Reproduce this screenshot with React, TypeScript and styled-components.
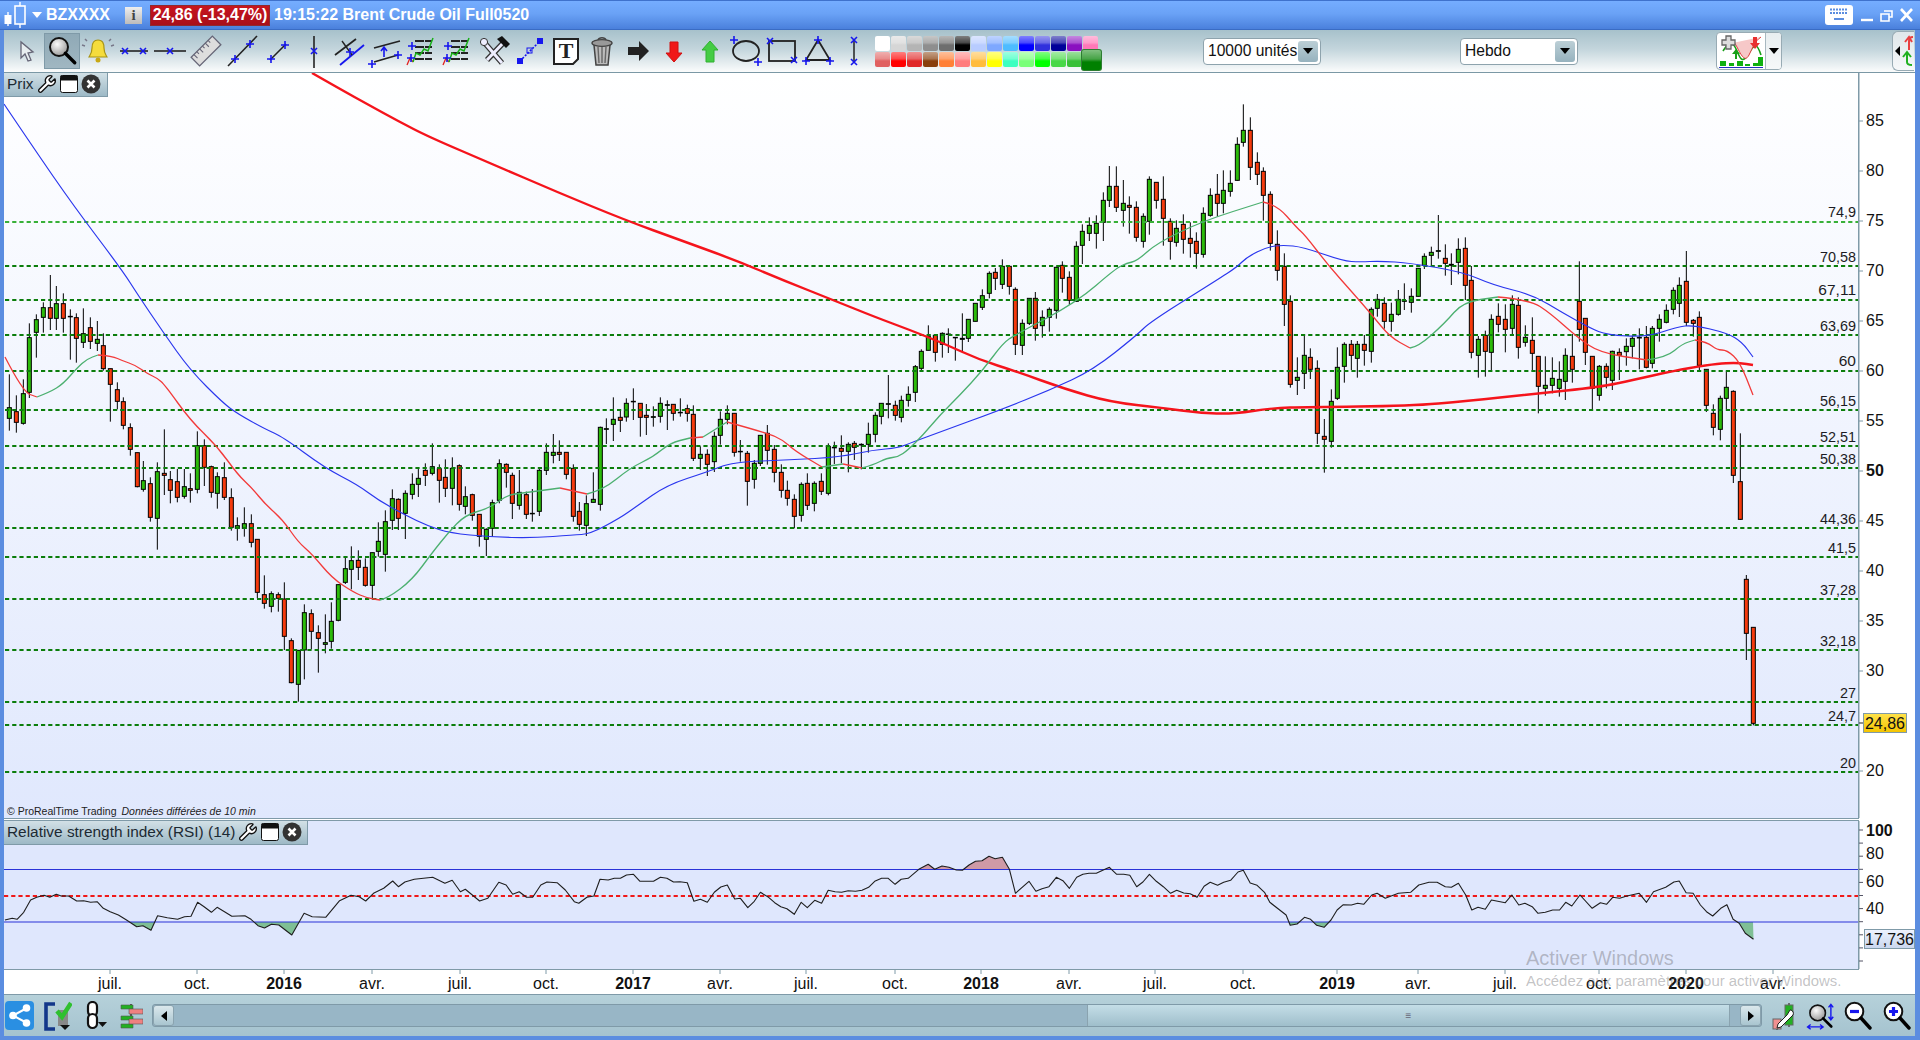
import React from "react"
import styled, { createGlobalStyle } from "styled-components"
import { Wrench } from "lucide-react"

const FONT = `"Liberation Sans", Arial, sans-serif`

const GlobalStyle = createGlobalStyle`
  html, body { margin: 0; padding: 0; background: #5b8de0; overflow: hidden; }
  * { box-sizing: border-box; }
`

/* ---------- data, read off the picture: x high top bottom low colour (in crop pixels) ---------- */

type Candle = { x: number; h: number; t: number; b: number; l: number; up: boolean }

const seg = (ox: number, oy: number, s: string): Candle[] =>
  s.trim().split("\n").map((row) => {
    const [x, h, t, b, l, c] = row.trim().split(" ")
    return {
      x: ox + Number(x) / 3,
      h: oy + Number(h) / 3,
      t: oy + Number(t) / 3,
      b: oy + Number(b) / 3,
      l: oy + Number(l) / 3,
      up: c === "g",
    }
  })

const CANDLES: Candle[] = [
  ...seg(0, 270, `
28 313 413 445 482 g
49 376 425 457 488 r
70 328 371 460 464 g
88 160 203 367 384 g
109 133 149 187 263 g
130 97 113 142 188 g
151 15 113 145 180 r
169 48 101 145 180 g
190 70 101 145 188 r
211 118 139 140 269 r
229 130 143 205 278 r
250 115 191 217 234 g
271 142 173 214 237 r
292 153 208 220 243 g
310 190 227 296 302 r
331 296 296 343 455 r
352 337 359 394 418 r
370 382 395 466 478 r
391 460 473 538 557 r
412 548 548 650 652 r
430 573 632 658 665 g
451 622 641 742 755 r
472 577 605 745 839 g
493 478 610 616 675 r
511 603 629 661 700 r
532 597 635 682 697 r
553 597 650 679 686 g
571 610 656 661 698 r
592 484 527 658 670 g
613 508 527 592 648 r
634 587 590 667 683 r
652 607 620 670 716 g
673 577 623 682 690 r
694 655 683 772 782 r
712 742 767 775 812 g
733 712 761 775 800 g
754 733 761 817 832 r
772 808 808 967 985 r
793 916 974 1000 1016 r
814 964 971 1009 1027 g
835 967 974 985 1025 r
853 937 987 1099 1140 r
874 1105 1112 1238 1240 r
895 1140 1141 1243 1295 g
913 1003 1028 1140 1228 g
934 1018 1031 1084 1138 r
955 1066 1088 1105 1208 r
976 1033 1118 1123 1150 g
994 997 1054 1114 1136 g
1015 943 944 1051 1054 g
1036 860 896 937 942 g
1054 829 872 898 958 g
1075 841 871 892 930 r
1096 865 892 946 950 r
1117 848 848 946 988 g
1135 757 814 844 860 g
1156 721 755 853 905 g
1177 658 686 751 780 g
1195 685 688 745 780 r
1216 661 670 730 807 g
1237 610 643 673 688 g
1255 597 625 643 681 g
1276 580 601 616 648 r
1297 520 590 610 616 g
1318 583 596 631 698 r
1336 568 622 655 681 r
1357 562 595 655 706 g
1378 583 587 703 722 r
1396 649 680 709 733 g
1417 671 674 736 752 r
1438 733 733 799 830 r
1459 775 778 808 858 g
1477 689 698 775 800 g
1498 568 581 691 700 g`),
  ...seg(490, 380, `
49 250 253 277 323 r
67 278 286 370 417 r
88 270 337 376 389 g
109 335 344 403 417 r
127 327 400 401 425 g
148 265 271 394 408 g
169 190 217 271 285 g
190 162 217 226 250 g
208 181 217 223 243 r
229 217 217 283 298 r
250 253 265 409 425 r
268 366 394 433 452 r
289 346 371 436 468 g
310 277 358 367 367 g
331 140 142 373 392 g
349 115 146 148 192 g
370 52 118 133 183 g
391 91 112 121 156 r
409 55 70 111 125 g
430 25 64 65 120 g
451 70 70 112 170 r
469 72 106 112 165 r
490 79 110 112 140 g
511 52 70 109 128 g
532 61 74 76 150 g
550 73 73 100 122 r
571 55 97 98 110 g
592 74 86 100 125 r
610 76 103 235 243 r
631 199 223 235 270 g
652 208 223 253 288 r
673 155 169 245 276 g
691 94 118 166 194 g
712 76 100 118 133 g
733 100 100 217 230 r
751 180 214 215 245 g
772 213 220 304 377 r
793 240 250 298 326 g
811 165 166 250 258 g
832 135 160 211 254 r
853 195 208 277 307 r
874 253 277 331 353 r
892 302 331 355 377 r
913 343 358 409 445 r
934 307 313 406 425 g
952 280 310 376 390 r
973 304 310 370 394 g
994 280 304 334 345 r
1015 190 199 340 346 g
1033 185 202 203 252 g
1054 166 205 214 250 r
1075 187 193 214 277 g
1093 183 190 202 240 r
1114 190 193 195 268 g
1135 128 163 193 218 g
1156 97 106 163 187 g
1174 70 70 109 133 g
1195 -15 71 73 115 g
1216 62 76 106 122 r
1234 47 61 112 127 g
1255 19 43 61 80 g
1276 -45 -40 37 66 g`),
  ...seg(860, 90, `
184 778 784 835 840 g
205 706 739 781 781 g
226 736 736 787 815 r
247 727 730 763 803 g
265 715 732 733 789 g
286 742 742 743 812 g
307 670 745 748 786 g
325 688 688 745 756 g
346 640 640 694 694 g
367 598 617 652 660 g
388 544 550 610 625 g
406 534 547 565 600 r
427 508 529 583 597 g
448 529 529 589 614 r
466 592 598 763 795 r
487 688 700 766 795 g
508 625 625 700 705 g
526 606 625 715 752 r
547 661 682 707 743 g
568 652 658 682 725 g
589 530 532 661 686 g
607 514 526 565 608 r
628 544 562 631 644 r
649 454 469 634 636 g
667 403 424 466 522 g
688 382 406 430 453 g
709 376 400 430 476 g
730 307 331 397 453 g
748 228 289 331 351 g
769 229 289 352 366 r
790 270 340 361 410 g
808 319 346 352 431 r
829 334 352 442 455 r
850 370 379 454 473 g
868 259 268 394 434 g
889 277 277 331 356 r
910 259 328 385 467 r
931 385 394 454 509 r
949 391 415 457 470 g
970 373 403 448 491 r
991 397 445 460 503 r
1009 427 454 490 536 r
1030 352 370 493 503 g
1051 295 316 376 380 g
1072 252 313 340 379 r
1090 241 301 340 370 g
1111 241 280 304 320 g
1132 142 163 271 272 g
1150 43 121 157 170 g
1171 82 121 232 270 r
1192 187 217 253 285 r
1210 232 244 316 392 r
1231 304 313 460 482 r
1252 421 463 541 572 r
1273 490 529 643 708 r`),
  ...seg(1200, 200, `
271 286 304 553 563 r
292 472 532 541 585 g
313 403 466 520 567 g
331 445 472 508 537 r
352 481 505 700 732 r
373 657 709 718 818 r
394 568 604 724 743 g
412 442 502 595 600 g
433 427 433 499 548 g
454 420 433 466 510 r
472 423 433 475 533 g
493 405 433 451 497 r
514 322 328 454 488 g
532 282 298 325 350 g
553 292 310 364 386 r
574 308 343 364 395 g
595 270 298 343 347 g
613 250 302 304 330 g
634 265 289 307 338 g
655 205 205 289 290 g
673 160 169 196 207 g
694 140 157 166 195 g
715 45 152 154 176 g
736 133 175 190 227 r
754 160 193 196 255 g
775 115 148 187 223 g
796 112 145 256 300 r
814 198 241 457 475 r
835 408 418 466 533 g
856 392 406 454 530 r
874 343 358 457 510 g
895 310 349 373 397 r
916 313 358 388 457 r
937 286 313 385 405 g
955 292 316 442 476 r
976 376 412 427 440 g
997 352 421 460 515 r
1015 469 469 559 640 r
1036 469 556 565 587 g
1057 472 535 556 580 g
1078 484 538 565 590 g
1096 445 466 544 600 g
1117 402 469 508 548 r
1138 184 304 388 425 r
1156 355 355 457 495 r
1177 469 469 565 632 r`),
  ...seg(1500, 200, `
298 495 499 586 602 g
319 490 499 532 565 r
337 452 454 541 570 g
358 445 457 466 540 r
379 415 439 455 497 g
397 407 415 439 475 g
418 385 412 414 508 g
439 378 412 502 505 r
457 378 385 490 505 g
478 343 358 385 425 g
499 313 331 367 370 g
520 262 271 328 343 g
538 232 256 310 351 g
559 153 244 367 378 r
580 357 361 370 410 r
598 334 352 496 512 r
619 507 508 616 636 r
640 613 640 682 706 r
661 587 595 688 721 g
679 514 562 595 627 g
700 571 574 826 849 r
721 700 845 958 960 r`),
  ...seg(1500, 540, `
739 105 118 280 360 r
760 262 262 550 556 r`),
]

/* rounds the corners of a polyline read off the picture */
const smooth = (s: string) => {
  const p = s.split(" ").map((q) => q.split(",").map(Number))
  let d = `M${p[0][0]} ${p[0][1]}`
  for (let i = 1; i < p.length - 1; i++) {
    const mx = (p[i][0] + p[i + 1][0]) / 2
    const my = (p[i][1] + p[i + 1][1]) / 2
    d += `Q${p[i][0]} ${p[i][1]} ${mx} ${my}`
  }
  const last = p[p.length - 1]
  return `${d}L${last[0]} ${last[1]}`
}

const THICK_RED =
  "312,73 340,89 367,104 398,121 429,137 490,163 557,192 625,220 680,240 735,260 785,281 833,300 875,317 910,330 945,344 980,360 1015,371 1065,389 1110,402 1163,408 1200,413 1233,414 1273,408 1307,407 1410,406 1467,401 1533,394 1600,387 1633,380 1673,371 1707,365 1727,363 1740,363 1753,365"

const BLUE_LINE =
  "4,104 35,150 73,205 122,270 138,295 163,332 190,370 223,403 238,414 265,429 283,437 325,468 358,485 378,500 405,515 428,526 450,533 490,537 533,538 573,535 590,534 620,518 637,506 667,485 707,472 733,462 790,460 840,457 873,450 898,448 913,442 940,432 1000,410 1050,390 1093,370 1137,335 1150,322 1217,280 1237,267 1247,257 1267,247 1283,245 1303,247 1343,261 1360,262 1380,261 1410,263 1463,272 1493,285 1533,295 1563,313 1590,328 1607,335 1647,337 1677,327 1693,325 1727,333 1742,342 1753,357"

const THIN_LINES: { up: boolean; d: string }[] = [
  { up: false, d: "5,357 23,392 37,397" },
  { up: true, d: "37,397 50,392 63,384 77,368 87,359 98,355" },
  { up: false, d: "98,355 112,356 123,361 135,365 148,374 157,378 165,385 190,420 217,446 238,475 252,488 265,504 283,520 298,542 312,554 332,578 353,592 367,598 380,600" },
  { up: true, d: "380,600 388,598 412,580 432,553 448,533 465,515 490,508 507,495 523,493 560,488" },
  { up: false, d: "560,488 587,494" },
  { up: true, d: "587,494 603,490 630,468 653,457 670,443 690,438" },
  { up: false, d: "690,438 703,437" },
  { up: true, d: "703,437 727,422" },
  { up: false, d: "727,422 767,433 783,440 795,451 822,467" },
  { up: true, d: "822,467 843,464" },
  { up: false, d: "843,464 862,468" },
  { up: true, d: "862,468 873,465 887,458 898,457 908,450 923,435 940,415 960,395 983,370 1003,343 1015,335 1077,302 1115,269 1127,263 1137,261 1157,243 1203,221 1263,202" },
  { up: false, d: "1263,202 1277,205 1297,228 1305,235 1328,265 1352,292 1372,315 1390,337 1410,348" },
  { up: true, d: "1410,348 1418,347 1445,323 1463,302 1498,297" },
  { up: false, d: "1498,297 1530,300 1550,313 1577,337 1600,353 1647,360" },
  { up: true, d: "1647,360 1667,357 1682,344 1695,340" },
  { up: false, d: "1695,340 1707,342 1717,350 1727,350 1740,362 1753,395" },
]

const LEVELS = [
  { y: 222, label: "74,9", light: true, dy: 5 },
  { y: 266, label: "70,58" },
  { y: 300, label: "67,11", big: true },
  { y: 335, label: "63,69" },
  { y: 371, label: "60", big: true },
  { y: 410, label: "56,15" },
  { y: 446, label: "52,51" },
  { y: 468, label: "50,38" },
  { y: 528, label: "44,36" },
  { y: 557, label: "41,5" },
  { y: 599, label: "37,28" },
  { y: 650, label: "32,18" },
  { y: 702, label: "27" },
  { y: 725, label: "24,7" },
  { y: 772, label: "20" },
]

const PRICE_TICKS = [85, 80, 75, 70, 65, 60, 55, 50, 45, 40, 35, 30, 20]

const TIME_TICKS: { x: number; t: string; bold?: boolean }[] = [
  { x: 110, t: "juil." },
  { x: 197, t: "oct." },
  { x: 284, t: "2016", bold: true },
  { x: 372, t: "avr." },
  { x: 460, t: "juil." },
  { x: 546, t: "oct." },
  { x: 633, t: "2017", bold: true },
  { x: 720, t: "avr." },
  { x: 806, t: "juil." },
  { x: 895, t: "oct." },
  { x: 981, t: "2018", bold: true },
  { x: 1069, t: "avr." },
  { x: 1155, t: "juil." },
  { x: 1243, t: "oct." },
  { x: 1337, t: "2019", bold: true },
  { x: 1418, t: "avr." },
  { x: 1505, t: "juil." },
  { x: 1599, t: "oct." },
  { x: 1686, t: "2020", bold: true },
  { x: 1773, t: "avr." },
]

const pts = (ox: number, oy: number, raw: number[]) => {
  const out: string[] = []
  for (let i = 0; i < raw.length; i += 2) {
    out.push(`${(ox + raw[i] / 2.45).toFixed(1)},${(oy + raw[i + 1] / 3).toFixed(1)}`)
  }
  return out
}

const RSI_POINTS = [
  ...pts(0, 790, [12,390,30,385,42,388,58,367,75,330,90,322,108,316,122,322,138,313,150,318,168,318,188,333,205,332,222,337,238,335,253,355,270,365,290,375,310,390,335,410,350,407,370,421,386,377,410,383,435,388,452,380,468,379,484,337,500,350,518,367,532,352,550,365,568,379,600,377,615,388,632,407,648,414,665,403,683,405,715,435,745,370,765,380,798,382,832,332,860,316,880,320,896,333,915,310,940,295,962,273,976,290,992,276,1015,268,1060,262,1090,280,1108,271,1128,305,1140,298,1175,333,1195,325,1222,277,1240,285,1256,313,1272,305,1290,322,1305,322,1325,285,1340,276,1365,278,1385,300,1407,335,1418,340,1438,322,1455,318,1470,268,1490,270,1505,265,1520,265,1535,255,1552,253]),
  ...pts(640, 840, [0,124,33,124,50,112,66,115,82,126,98,125,116,128,132,184,148,178,165,187,182,157,198,141,214,135,232,177,246,175,264,203,280,184,295,157,315,172,330,188,345,200,360,206,378,223,395,187,410,203,428,181,445,190,461,151,478,155,494,157,510,152,528,154,544,151,560,142,575,124,592,115,608,115,625,133,640,118,657,115,683,88,706,73,722,88,740,78,757,82,775,90,790,91,806,75,822,64,838,62,855,49,870,56,888,52,905,88,920,160,953,124,970,154,985,146,1002,140,1020,112,1036,122,1052,145,1070,112,1085,103,1100,100,1118,100,1135,90,1150,82,1168,103,1185,103,1200,106,1217,140,1232,126,1248,103,1265,124,1282,140,1300,160,1315,151,1332,159,1348,161,1365,172,1382,139,1397,127,1415,136,1430,127,1447,121,1465,96,1478,91,1495,129,1512,136,1530,157,1543,187,1568,211]),
  ...pts(1280, 790, [15,375,25,406,42,402,60,382,75,388,90,406,108,412,125,390,140,360,155,344,175,345,190,340,205,343,225,315,238,310,258,325,290,310,320,307,340,285,365,277,385,277,405,290,420,292,437,280,455,315,470,360,485,352,503,358,518,330,552,338,568,315,585,345,600,340,618,350,632,370,650,367,668,360,685,360,700,337,715,348,735,315,765,355,785,338,800,343,815,322,832,325,850,318,880,310,898,337,915,305,945,292,965,276,978,273,995,308,1012,310,1030,345,1045,365,1060,378,1080,355,1095,344,1110,388,1125,400,1140,430,1160,448]),
]

/* ---------- window frame ---------- */

const Window = styled.div`
  position: relative;
  width: 1920px;
  height: 1040px;
  display: flex;
  flex-direction: column;
  background: #5b8de0;
  font-family: ${FONT};
  overflow: hidden;
`

const TitleBar = styled.header`
  height: 30px;
  flex: none;
  display: flex;
  align-items: center;
  padding-left: 4px;
  color: #fff;
  font-size: 16px;
  font-weight: 700;
  background: linear-gradient(#75adff, #6aa2f6 45%, #4a80dc);
  border-top: 1px solid #3f72cc;
  border-bottom: 1px solid #3a6cc4;
`

const Ticker = styled.span`
  margin-left: 3px;
  width: 79px;
`

const InfoButton = styled.span`
  width: 17px;
  height: 17px;
  display: flex;
  align-items: center;
  justify-content: center;
  font-family: "Liberation Serif", serif;
  font-size: 15px;
  color: #444;
  background: linear-gradient(#eee, #bbb);
`

const PriceBadge = styled.span`
  margin-left: 8px;
  height: 21px;
  width: 120px;
  display: flex;
  align-items: center;
  justify-content: center;
  background: linear-gradient(#c8141f, #a80f1a);
  border: 1px solid #8e2a30;
  white-space: nowrap;
`

const TitleText = styled.span`
  margin-left: 4px;
  white-space: nowrap;
`

const WindowControls = styled.div`
  margin-left: auto;
  display: flex;
  align-items: center;
  padding-right: 7px;
`

const Toolbar = styled.nav`
  height: 43px;
  width: 1911px;
  flex: none;
  display: flex;
  align-items: center;
  padding-left: 4px;
  margin-left: 4px;
  background: linear-gradient(#a7c1cb, #c3d5dc 45%, #fbfcfc);
  border-bottom: 1px solid #7b98a5;
`

const ToolButton = styled.button<{ $active?: boolean }>`
  width: 36px;
  height: 36px;
  padding: 0;
  border: none;
  display: flex;
  align-items: center;
  justify-content: center;
  background: ${(p) => (p.$active ? "linear-gradient(#8fa9b6, #a1b7c2)" : "transparent")};
  box-shadow: ${(p) => (p.$active ? "inset 0 0 0 1px #7f9aa8" : "none")};
`

const Palette = styled.div`
  display: grid;
  grid-template-columns: repeat(14, 15px);
  grid-auto-rows: 15px;
  gap: 1px;
  margin-left: 3px;
`

const Swatch = styled.span<{ $c: string; $selected?: boolean }>`
  display: block;
  border-radius: 2px;
  background:
    linear-gradient(rgba(255, 255, 255, 0.5), rgba(255, 255, 255, 0.28) 45%, rgba(255, 255, 255, 0) 60%),
    ${(p) => p.$c};
  ${(p) =>
    p.$selected &&
    `
      width: 19px;
      height: 20px;
      margin: -2px 0 0 -1px;
      box-shadow: 0 0 0 1px #2e7d32;
    `}
`

const SelectBox = styled.div<{ $ml: number; $w: number }>`
  margin-left: ${(p) => p.$ml}px;
  width: ${(p) => p.$w}px;
  height: 27px;
  display: flex;
  align-items: center;
  justify-content: space-between;
  padding: 0 2px 0 4px;
  font-size: 15.6px;
  color: #111;
  background: #fff;
  border: 1px solid #8ea3ad;
  border-radius: 4px;
  white-space: nowrap;
`

const SelectArrow = styled.span`
  width: 20px;
  height: 21px;
  flex: none;
  border-radius: 3px;
  display: flex;
  align-items: center;
  justify-content: center;
  background: linear-gradient(#bccfd6, #96b2be);
  &::after {
    content: "";
    border: 5px solid transparent;
    border-top: 6px solid #000;
    margin-top: 5px;
  }
`

const IndicatorButton = styled.div`
  margin-left: 138px;
  width: 66px;
  height: 38px;
  display: flex;
  background: #fff;
  border: 1px solid #98abb4;
  border-radius: 4px;
  overflow: hidden;
`

const IndicatorDrop = styled.span`
  flex: 1;
  display: flex;
  align-items: center;
  justify-content: center;
  background: linear-gradient(#e8eef0, #f6f8f9);
  border-left: 1px solid #a8b8c0;
  &::after {
    content: "";
    border: 5px solid transparent;
    border-top: 6px solid #000;
    margin-top: 5px;
  }
`

const SideTab = styled.div`
  margin-left: 110px;
  width: 22px;
  height: 40px;
  border: 1px solid #98abb4;
  border-right: none;
  border-radius: 6px 0 0 6px;
  background: linear-gradient(#dfe7ea, #f6f8f9);
  display: flex;
`

/* ---------- panes ---------- */

const Content = styled.main`
  flex: 1;
  display: flex;
  flex-direction: column;
  margin: 0 5px 4px 4px;
  background: #fff;
  min-height: 0;
`

const PaneRow = styled.section<{ $h: number }>`
  height: ${(p) => p.$h}px;
  flex: none;
  display: flex;
`

const ChartArea = styled.div<{ $flat?: boolean }>`
  position: relative;
  width: 1855px;
  height: 100%;
  border-right: 1px solid #7f9aa8;
  background: ${(p) => (p.$flat ? "#dfe7fd" : "linear-gradient(#ffffff, #e0e8fd)")};
  & > svg {
    display: block;
  }
`

const AxisColumn = styled.div`
  width: 56px;
  height: 100%;
  background: #fff;
  & > svg {
    display: block;
  }
`

const PaneGap = styled.div`
  height: 3px;
  flex: none;
  border-top: 1px solid #7f9aa8;
  border-bottom: 1px solid #7f9aa8;
  width: 1855px;
  background: #fff;
`

const Legend = styled.div<{ $w: number }>`
  position: absolute;
  left: 0;
  top: 0;
  width: ${(p) => p.$w}px;
  height: 24px;
  display: flex;
  align-items: center;
  gap: 2px;
  padding: 0 0 1px 3px;
  font-size: 15.4px;
  color: #1c2a33;
  white-space: nowrap;
  background: linear-gradient(#d2e0e6, #9db9c6);
  border-right: 1px solid #7f9aa8;
  border-bottom: 1px solid #7f9aa8;
`

const LegendText = styled.span`
  margin-right: 1px;
`

const Credit = styled.div`
  position: absolute;
  left: 3px;
  bottom: 0;
  font-size: 10.5px;
  line-height: 13px;
  color: #222;
  white-space: nowrap;
`

const CreditNote = styled.i`
  margin-left: 5px;
`

const TimeAxis = styled.div`
  height: 26px;
  flex: none;
  background: #fff;
  border-bottom: 1px solid #7f9aa8;
  & > svg {
    display: block;
  }
`

const BottomBar = styled.footer`
  flex: 1;
  display: flex;
  align-items: center;
  background: linear-gradient(#b6d1da, #a5c3cf);
`

const BarIcon = styled.span<{ $ml: number }>`
  display: flex;
  margin-left: ${(p) => p.$ml}px;
`

const Scroller = styled.div`
  margin-left: 9px;
  width: 1610px;
  height: 23px;
  flex: none;
  display: flex;
  background: #98b6c6;
  border: 1px solid #7f9aa8;
  border-radius: 3px;
`

const ScrollButton = styled.span<{ $right?: boolean }>`
  width: 21px;
  height: 100%;
  flex: none;
  display: flex;
  align-items: center;
  justify-content: center;
  background: linear-gradient(#dbe8ec, #a9c5d0);
  border: 1px solid #8aa3af;
  border-radius: 3px;
  margin-left: ${(p) => (p.$right ? "10px" : "0")};
  &::after {
    content: "";
    border: 5px solid transparent;
    ${(p) => (p.$right ? "border-left: 6px solid #000; margin-left: 5px;" : "border-right: 6px solid #000; margin-right: 5px;")}
  }
`

const ScrollSpace = styled.span`
  flex: 1;
`

const ScrollThumb = styled.span`
  width: 643px;
  height: 100%;
  flex: none;
  display: flex;
  align-items: center;
  justify-content: center;
  font-size: 10px;
  color: #667;
  background: linear-gradient(#c4dee7, #9fbecb);
  border-left: 1px solid #8aa3af;
  border-right: 1px solid #8aa3af;
`

const WatermarkTitle = styled.div`
  position: absolute;
  left: 1526px;
  top: 946px;
  font-size: 20px;
  line-height: 24px;
  color: rgba(110, 110, 115, 0.42);
  white-space: nowrap;
`

const WatermarkText = styled.div`
  position: absolute;
  left: 1526px;
  top: 973px;
  font-size: 14.9px;
  line-height: 17px;
  color: rgba(110, 110, 115, 0.42);
  white-space: nowrap;
`

/* ---------- little drawings ---------- */

const Plus = ({ x, y, c = "#1616ee" }: { x: number; y: number; c?: string }) => (
  <path d={`M${x - 4} ${y}h8M${x} ${y - 4}v8`} stroke={c} strokeWidth="1.6" fill="none" />
)

const Cross = ({ x, y, c = "#1616ee" }: { x: number; y: number; c?: string }) => (
  <path d={`M${x - 3} ${y - 3}l6 6M${x + 3} ${y - 3}l-6 6`} stroke={c} strokeWidth="1.6" fill="none" />
)

const Icon = ({ children, size = 36 }: { children: React.ReactNode; size?: number }) => (
  <svg width={size} height={size} viewBox="0 0 36 36">
    {children}
  </svg>
)

const Lens = ({ x, y, r }: { x: number; y: number; r: number }) => (
  <>
    <circle cx={x} cy={y} r={r} fill="url(#lensFill)" stroke="#111" strokeWidth="2" />
    <path d={`M${x + r * 0.7} ${y + r * 0.7}l${r * 1.05} ${r * 1.05}`} stroke="#000" strokeWidth="3.4" strokeLinecap="round" />
  </>
)

const FibIcon = () => (
  <Icon>
    <path d="M11 8h17M11 14h17M11 20h17M11 26h17" stroke="#222" strokeWidth="1.8" strokeDasharray="9 1" />
    <path d="M3 32l3-7 3 4" stroke="#e02020" strokeWidth="1.3" fill="none" />
    <path d="M9 29l3-9 4 2 4-6 4 2 5-13" stroke="#18b018" strokeWidth="1.5" fill="none" />
    <Plus x={8} y={13} />
    <Plus x={7} y={25} />
  </Icon>
)

const TOOL_ICONS: React.ReactNode[] = [
  <Icon key="arrow">
    <path d="M13 9l0 16 4-4 3 7 3-1-3-7 5-1z" fill="#e8eef0" stroke="#667" strokeWidth="1.3" />
  </Icon>,
  <Icon key="zoom">
    <Lens x={15} y={14} r={9} />
  </Icon>,
  <Icon key="bell">
    <path d="M18 7c-5 0-6 4-6 8 0 5-2 7-3 9h18c-1-2-3-4-3-9 0-4-1-8-6-8z" fill="#f5dc3c" stroke="#a89414" strokeWidth="1.2" />
    <circle cx="18" cy="27" r="2.5" fill="#c8a814" />
    <path d="M7 8l-2-2M5 13l-3-1M29 8l2-2M31 13l3-1" stroke="#778" strokeWidth="1.5" />
  </Icon>,
  <Icon key="line-two">
    <path d="M4 18h28" stroke="#222" strokeWidth="1.6" />
    <Cross x={9} y={18} />
    <Cross x={27} y={18} />
  </Icon>,
  <Icon key="line-one">
    <path d="M2 18h32" stroke="#222" strokeWidth="1.6" />
    <Cross x={18} y={18} />
  </Icon>,
  <Icon key="ruler">
    <g transform="rotate(-45 18 18)">
      <rect x="3" y="12" width="30" height="12" fill="#ddd" stroke="#667" strokeWidth="1.3" />
      <path d="M7 12v5M11 12v3M15 12v5M19 12v3M23 12v5M27 12v3" stroke="#667" strokeWidth="1.1" />
    </g>
  </Icon>,
  <Icon key="line-long">
    <path d="M4 33L33 3" stroke="#222" strokeWidth="1.6" />
    <Plus x={11} y={26} />
    <Plus x={26} y={11} />
  </Icon>,
  <Icon key="line-short">
    <path d="M10 27l16-16" stroke="#222" strokeWidth="1.6" />
    <Plus x={11} y={26} />
    <Plus x={25} y={12} />
  </Icon>,
  <Icon key="vertical">
    <path d="M18 3v32" stroke="#222" strokeWidth="1.6" />
    <Cross x={18} y={18} />
  </Icon>,
  <Icon key="parallel">
    <path d="M3 22L24 6" stroke="#222" strokeWidth="1.8" />
    <path d="M8 32L32 12" stroke="#1616ee" strokeWidth="1.8" />
    <path d="M10 8l10 14" stroke="#222" strokeWidth="1.4" />
    <Plus x={18} y={19} />
  </Icon>,
  <Icon key="channel">
    <path d="M6 15L32 8" stroke="#222" strokeWidth="1.8" />
    <path d="M6 29L30 22" stroke="#222" strokeWidth="1.8" />
    <path d="M16 24v-9M13 18l3-4 3 4" stroke="#1616ee" strokeWidth="1.6" fill="none" />
    <Plus x={4} y={31} />
    <Plus x={30} y={22} />
  </Icon>,
  <FibIcon key="fib" />,
  <FibIcon key="fib-two" />,
  <Icon key="tools">
    <path d="M7 8l19 22M29 8L11 27" stroke="#333" strokeWidth="5.5" />
    <path d="M7 8l19 22M29 8L11 27" stroke="#eef" strokeWidth="3" />
    <path d="M21 6l5-3 8 8-4 4z" fill="#111" />
    <circle cx="8" cy="9" r="3.6" fill="#eef" stroke="#333" />
  </Icon>,
  <Icon key="segment">
    <path d="M8 28L28 8" stroke="#1616ee" strokeWidth="1.6" strokeDasharray="2 1.5" />
    <rect x="5" y="25" width="6" height="6" fill="#1616ee" />
    <rect x="25" y="5" width="6" height="6" fill="#1616ee" />
    <rect x="15" y="15" width="5" height="5" fill="none" stroke="#1616ee" />
  </Icon>,
  <Icon key="text">
    <path d="M6 6h24v20l-5 5H6z" fill="#fff" stroke="#222" strokeWidth="2" />
    <text x="18" y="25" textAnchor="middle" fontFamily="'Liberation Serif', serif" fontWeight="700" fontSize="22" fill="#222">T</text>
  </Icon>,
  <Icon key="trash">
    <path d="M10 12h16l-2 20H12z" fill="#bbb" stroke="#444" strokeWidth="1.5" />
    <path d="M14 14l1 16M18 14v16M22 14l-1 16" stroke="#666" strokeWidth="1.4" />
    <ellipse cx="18" cy="10" rx="10" ry="3.4" fill="#999" stroke="#444" strokeWidth="1.4" />
    <path d="M14 7c1-3 7-3 8 0" fill="none" stroke="#444" strokeWidth="1.4" />
  </Icon>,
  <Icon key="right-arrow">
    <path d="M8 14h11v-6l10 10-10 10v-6H8z" fill="#222" />
  </Icon>,
  <Icon key="down-arrow">
    <path d="M14 9h8v11h4L18 29 10 20h4z" fill="#f01818" stroke="#d01010" />
  </Icon>,
  <Icon key="up-arrow">
    <path d="M14 29h8V17h4L18 8l-8 9h4z" fill="#44cc44" stroke="#30b030" />
  </Icon>,
  <Icon key="ellipse">
    <ellipse cx="18" cy="18" rx="13" ry="10" fill="none" stroke="#222" strokeWidth="1.8" />
    <Plus x={6} y={7} />
    <Plus x={30} y={29} />
  </Icon>,
  <Icon key="rect">
    <rect x="5" y="8" width="26" height="20" fill="none" stroke="#222" strokeWidth="1.8" />
    <Cross x={6} y={8} />
    <Cross x={30} y={27} />
  </Icon>,
  <Icon key="triangle">
    <path d="M18 7L30 27H6z" fill="none" stroke="#222" strokeWidth="1.8" />
    <Plus x={18} y={7} />
    <Plus x={6} y={28} />
    <Plus x={30} y={28} />
  </Icon>,
  <Icon key="range">
    <path d="M18 7v22" stroke="#222" strokeWidth="1.5" />
    <Cross x={18} y={7} />
    <Cross x={18} y={29} />
  </Icon>,
]

const PALETTE = [
  "#ffffff", "#d6d6d6", "#b4b4b4", "#8e8e8e", "#6e6e6e", "#000000", "#b8ccff", "#7ea8ff", "#4dbcff", "#0000ff", "#3030dd", "#000099", "#8a10c0", "#ff78b8",
  "#e06060", "#ff0000", "#e02828", "#883f0c", "#ff8036", "#ff7c7c", "#ffbc3c", "#ffff00", "#3cffc0", "#78ff78", "#00ff00", "#48d848", "#38c038", "#008000",
]

const LegendButtons = () => (
  <>
    <Wrench size={20} fill="#fff" color="#111" strokeWidth={1.6} />
    <svg width="20" height="20" viewBox="0 0 20 20">
      <rect x="1.5" y="1.5" width="17" height="17" rx="2" fill="#fff" stroke="#111" />
      <rect x="1.5" y="1.5" width="17" height="5" fill="#111" />
    </svg>
    <svg width="20" height="20" viewBox="0 0 20 20">
      <circle cx="10" cy="10" r="9.5" fill="#333" />
      <path d="M6.5 6.5l7 7M13.5 6.5l-7 7" stroke="#fff" strokeWidth="2.6" />
    </svg>
  </>
)

/* ---------- charts ---------- */

const Candles = () => (
  <g>
    {CANDLES.map((c, i) => (
      <g key={i}>
        <line x1={c.x} x2={c.x} y1={c.h} y2={c.l} stroke="#000" strokeWidth="1" />
        <rect
          x={c.x - 2}
          y={c.t}
          width="4"
          height={Math.max(c.b - c.t, 0.5)}
          fill={c.up ? "#2cbb0a" : "#f53a0c"}
          stroke="#000"
          strokeWidth="1"
        />
      </g>
    ))}
  </g>
)

const PriceChart = () => (
  <svg width="1854" height="745" viewBox="4 73 1854 745" fontFamily={FONT}>
    <Candles />
    {LEVELS.map((l) => (
      <line
        key={l.y}
        x1="5"
        x2="1858"
        y1={l.y}
        y2={l.y}
        stroke={l.light ? "#38b038" : "#0b7d0b"}
        strokeWidth="2"
        strokeDasharray="4.2 3"
      />
    ))}
    <path d={smooth(THICK_RED)} fill="none" stroke="#f5141c" strokeWidth="2.4" />
    <path d={smooth(BLUE_LINE)} fill="none" stroke="#2a36ee" strokeWidth="1.2" />
    {THIN_LINES.map((l, i) => (
      <path key={i} d={smooth(l.d)} fill="none" stroke={l.up ? "#4cb070" : "#f23a3a"} strokeWidth="1.3" />
    ))}
    {LEVELS.map((l) => (
      <text
        key={l.label}
        x="1856"
        y={l.y - (l.dy ?? (l.big ? 5 : 4))}
        textAnchor="end"
        fontSize={l.big ? 15.5 : 14.4}
        fill="#1c1c24"
      >
        {l.label}
      </text>
    ))}
  </svg>
)

const PriceAxis = () => (
  <svg width="56" height="745" viewBox="1859 73 56 745" fontFamily={FONT}>
    <line x1="1859" x2="1859" y1="73" y2="818" stroke="#7f9aa8" />
    {PRICE_TICKS.map((p) => {
      const y = 771 + (20 - p) * 10
      return (
        <g key={p}>
          <line x1="1859" x2="1863" y1={y} y2={y} stroke="#7f9aa8" />
          <text x="1866" y={y + 4.5} fontSize="16" fontWeight={p === 50 ? 700 : 400} fill="#111">
            {p}
          </text>
        </g>
      )
    })}
    <line x1="1859" x2="1863" y1="723" y2="723" stroke="#222" />
    <rect x="1863.5" y="713.5" width="43" height="19" fill="url(#goldBox)" stroke="#7f9aa8" />
    <text x="1885" y="728.5" textAnchor="middle" fontSize="16" fill="#111">24,86</text>
    <defs>
      <linearGradient id="goldBox" x1="0" y1="0" x2="0" y2="1">
        <stop offset="0" stopColor="#ffe24a" />
        <stop offset="1" stopColor="#f4c400" />
      </linearGradient>
    </defs>
  </svg>
)

const RSI_AREA = `4,922 ${RSI_POINTS.join(" ")} 1753,922`
const RSI_TOP = `4,869.5 ${RSI_POINTS.join(" ")} 1753,869.5`

const RsiChart = () => (
  <svg width="1854" height="148" viewBox="4 821 1854 148">
    <defs>
      <clipPath id="rsiLow">
        <rect x="4" y="922" width="1854" height="47" />
      </clipPath>
      <clipPath id="rsiHigh">
        <rect x="4" y="821" width="1854" height="48.5" />
      </clipPath>
    </defs>
    <polygon points={RSI_AREA} fill="#7fbf95" clipPath="url(#rsiLow)" />
    <polygon points={RSI_TOP} fill="#cf9aa6" clipPath="url(#rsiHigh)" />
    <line x1="4" x2="1858" y1="869.5" y2="869.5" stroke="#2a32d8" strokeWidth="1.2" />
    <line x1="4" x2="1858" y1="922" y2="922" stroke="#2a32d8" strokeWidth="1.2" />
    <line x1="4" x2="1858" y1="896" y2="896" stroke="#f01818" strokeWidth="2" strokeDasharray="4.2 3" />
    <polyline points={RSI_POINTS.join(" ")} fill="none" stroke="#1e1e1e" strokeWidth="1.1" strokeLinejoin="round" />
  </svg>
)

const RsiAxis = () => (
  <svg width="56" height="148" viewBox="1859 821 56 148" fontFamily={FONT}>
    <line x1="1859" x2="1859" y1="821" y2="969" stroke="#7f9aa8" />
    {[0, 1, 2, 3, 4, 5, 6, 7, 8, 9, 10].map((i) => (
      <line key={i} x1="1859" x2="1863" y1={830 + i * 13.1} y2={830 + i * 13.1} stroke="#556" />
    ))}
    <text x="1866" y="835.5" fontSize="16" fontWeight="700" fill="#111">100</text>
    <text x="1866" y="858.5" fontSize="16" fill="#111">80</text>
    <text x="1866" y="886.5" fontSize="16" fill="#111">60</text>
    <text x="1866" y="913.5" fontSize="16" fill="#111">40</text>
    <rect x="1864.5" y="929.5" width="50" height="19" fill="url(#rsiBox)" stroke="#7f9aa8" />
    <text x="1889.5" y="944.5" textAnchor="middle" fontSize="16" fill="#111">17,736</text>
    <defs>
      <linearGradient id="rsiBox" x1="0" y1="0" x2="0" y2="1">
        <stop offset="0" stopColor="#eef3ff" />
        <stop offset="1" stopColor="#c9d6ee" />
      </linearGradient>
    </defs>
  </svg>
)

const TimeScale = () => (
  <svg width="1911" height="25" viewBox="4 969 1911 25" fontFamily={FONT}>
    <line x1="4" x2="1859" y1="969.5" y2="969.5" stroke="#7f9aa8" />
    {TIME_TICKS.map((t) => (
      <g key={t.x}>
        <line x1={t.x} x2={t.x} y1="969" y2="974" stroke="#7f9aa8" />
        <text x={t.x} y="989" textAnchor="middle" fontSize="16" fontWeight={t.bold ? 700 : 400} fill="#111">
          {t.t}
        </text>
      </g>
    ))}
  </svg>
)

/* ---------- page ---------- */

const App = () => (
  <Window>
    <GlobalStyle />
    <svg width="0" height="0" style={{ position: "absolute" }}>
      <defs>
        <radialGradient id="lensFill" cx="0.4" cy="0.35" r="0.75">
          <stop offset="0" stopColor="#fbfbfb" />
          <stop offset="1" stopColor="#8f8f8f" />
        </radialGradient>
      </defs>
    </svg>

    <TitleBar>
      <svg width="23" height="26" viewBox="0 0 23 26">
        <path d="M4 10v14" stroke="#fff" strokeWidth="1.4" />
        <rect x="0.5" y="13" width="7" height="9" fill="#fff" />
        <path d="M16 0v26" stroke="#fff" strokeWidth="1.4" />
        <rect x="11" y="4" width="10" height="18" fill="#6aa2f6" stroke="#fff" strokeWidth="1.6" />
      </svg>
      <svg width="12" height="8" viewBox="0 0 12 8" style={{ marginLeft: 4 }}>
        <path d="M1 1h10L6 7z" fill="#fff" />
      </svg>
      <Ticker>BZXXXX</Ticker>
      <InfoButton>i</InfoButton>
      <PriceBadge>24,86 (-13,47%)</PriceBadge>
      <TitleText>19:15:22 Brent Crude Oil Full0520</TitleText>
      <WindowControls>
        <svg width="88" height="22" viewBox="0 0 88 22">
          <rect x="0" y="1" width="28" height="20" rx="3" fill="#fff" />
          <path d="M5 5.5h18M5 9h18" stroke="#5b8de0" strokeWidth="2" strokeDasharray="2 1" />
          <path d="M9 15h10" stroke="#5b8de0" strokeWidth="2" />
          <path d="M36 16h12" stroke="#fff" strokeWidth="2.4" />
          <path d="M59 7h8v6h-3M56 10h8v7h-8z" fill="none" stroke="#fff" strokeWidth="1.6" />
          <path d="M76 5l11 12M87 5L76 17" stroke="#fff" strokeWidth="2.6" />
        </svg>
      </WindowControls>
    </TitleBar>

    <Toolbar>
      {TOOL_ICONS.map((icon, i) => (
        <ToolButton key={i} $active={i === 1}>
          {icon}
        </ToolButton>
      ))}
      <Palette>
        {PALETTE.map((c, i) => (
          <Swatch key={c + i} $c={c} $selected={i === PALETTE.length - 1} />
        ))}
      </Palette>
      <SelectBox $ml={105} $w={118}>
        10000 unités
        <SelectArrow />
      </SelectBox>
      <SelectBox $ml={139} $w={118}>
        Hebdo
        <SelectArrow />
      </SelectBox>
      <IndicatorButton>
        <svg width="48" height="36" viewBox="0 0 48 36">
          <path d="M6 18c6-10 10-10 14 0s6 12 12 2 8-10 12 2" fill="none" stroke="#18a018" strokeWidth="1.6" />
          <path d="M6 12c6-6 10-6 14 2s8 16 12 8 6-14 12-18" fill="#f6c8c8" stroke="#e04040" strokeWidth="1" />
          <path d="M5 7h4V3h5v4h4v5h-4v4H9v-4H5z" fill="#ddd" stroke="#666" strokeWidth="1.3" />
          <path d="M36 4h4v6h3l-5 6-5-6h3z" fill="#e83030" />
          <path d="M18 26v-5h-3l4-5 4 5h-3v5z" fill="#18a018" />
          <path d="M3 28h6v5H3zM12 30h5v3h-5zM20 28h6v5h-6zM28 31h5v2h-5zM36 30h5v3h-5zM41 24h5v9h-5z" fill="#10b010" />
          <path d="M2 34.5h44" stroke="#2030c0" strokeWidth="1.2" />
        </svg>
        <IndicatorDrop />
      </IndicatorButton>
      <SideTab>
        <svg width="21" height="38" viewBox="0 0 21 38">
          <path d="M2 19l5-5v10z" fill="#000" />
          <path d="M16 18V9c0-3 2-4 4-4M12 10l4-5 3 5" fill="none" stroke="#e84040" strokeWidth="2" />
          <path d="M14 20v10c0 2 2 3 5 3M10 25l4-5 4 5" fill="none" stroke="#20b020" strokeWidth="2" />
        </svg>
      </SideTab>
    </Toolbar>

    <Content>
      <PaneRow $h={745}>
        <ChartArea>
          <PriceChart />
          <Legend $w={104}>
            <LegendText>Prix</LegendText>
            <LegendButtons />
          </Legend>
          <Credit>
            © ProRealTime Trading
            <CreditNote>Données différées de 10 min</CreditNote>
          </Credit>
        </ChartArea>
        <AxisColumn>
          <PriceAxis />
        </AxisColumn>
      </PaneRow>
      <PaneGap />
      <PaneRow $h={148}>
        <ChartArea $flat>
          <RsiChart />
          <Legend $w={304}>
            <LegendText>Relative strength index (RSI) (14)</LegendText>
            <LegendButtons />
          </Legend>
        </ChartArea>
        <AxisColumn>
          <RsiAxis />
        </AxisColumn>
      </PaneRow>
      <TimeAxis>
        <TimeScale />
      </TimeAxis>
      <BottomBar>
        <BarIcon $ml={1}>
          <svg width="29" height="29" viewBox="0 0 29 29">
            <rect width="29" height="29" rx="4" fill="#2a8fe2" />
            <path d="M22 7L8 14.5 22 22" stroke="#fff" strokeWidth="2" fill="none" />
            <circle cx="21.5" cy="7" r="3.8" fill="#fff" />
            <circle cx="8" cy="14.5" r="3.8" fill="#fff" />
            <circle cx="21.5" cy="22" r="3.8" fill="#fff" />
          </svg>
        </BarIcon>
        <BarIcon $ml={10}>
          <svg width="28" height="30" viewBox="0 0 28 30">
            <path d="M11 3H2v25h9" fill="none" stroke="#12378a" strokeWidth="3.6" />
            <path d="M14 9h10v16H14z" fill="#888" />
            <path d="M13 10l5 6 9-14" fill="none" stroke="#2fc02f" strokeWidth="4.4" />
            <path d="M16 24h10l-5 5z" fill="#111" />
          </svg>
        </BarIcon>
        <BarIcon $ml={13}>
          <svg width="22" height="30" viewBox="0 0 22 30">
            <rect x="3" y="1" width="9" height="14" rx="4.5" fill="#fff" stroke="#111" strokeWidth="2.2" />
            <rect x="3" y="13" width="9" height="14" rx="4.5" fill="#fff" stroke="#111" strokeWidth="2.2" />
            <path d="M13 21h9l-4.5 5z" fill="#111" />
          </svg>
        </BarIcon>
        <BarIcon $ml={12}>
          <svg width="24" height="26" viewBox="0 0 24 26">
            <path d="M12 1v24" stroke="#555" strokeWidth="2" />
            <path d="M2 2h12v4H2zM2 13h12v4H2zM2 21h12v4H2z" fill="#22b022" stroke="#555" strokeWidth="0.6" />
            <path d="M10 6h14v5H10zM10 16h14v5H10z" fill="#f08080" stroke="#555" strokeWidth="0.6" />
          </svg>
        </BarIcon>
        <Scroller>
          <ScrollButton />
          <ScrollSpace />
          <ScrollThumb>≡</ScrollThumb>
          <ScrollButton $right />
        </Scroller>
        <BarIcon $ml={10}>
          <svg width="22" height="30" viewBox="0 0 22 30">
            <path d="M5 18v11M17 2v24" stroke="#555" strokeWidth="1.6" />
            <rect x="1" y="18" width="8" height="10" fill="#f09090" stroke="#666" />
            <rect x="13" y="4" width="8" height="20" fill="#22b022" stroke="#666" />
            <path d="M18 9l-3 5-9 9-1 4 4-1 9-9 3-3c1-2 0-4-2-5z" fill="#fff" stroke="#222" />
          </svg>
        </BarIcon>
        <BarIcon $ml={12}>
          <svg width="28" height="30" viewBox="0 0 36 36">
            <Lens x={15} y={14} r={10} />
            <path d="M32 3v20M29 7l3-4 3 4M29 19l3 4 3-4" stroke="#1616ee" strokeWidth="1.8" fill="none" />
            <path d="M2 32h20M6 29l-4 3 4 3M18 29l4 3-4 3" stroke="#1616ee" strokeWidth="1.8" fill="none" />
          </svg>
        </BarIcon>
        <BarIcon $ml={10}>
          <svg width="28" height="30" viewBox="0 0 28 30">
            <circle cx="10.5" cy="10.5" r="8.8" fill="#fff" stroke="#111" strokeWidth="2" />
            <path d="M6 10.5h9" stroke="#1616ee" strokeWidth="3.2" />
            <path d="M17 17l9 10" stroke="#000" strokeWidth="3.4" strokeLinecap="round" />
          </svg>
        </BarIcon>
        <BarIcon $ml={11}>
          <svg width="28" height="30" viewBox="0 0 28 30">
            <circle cx="10.5" cy="10.5" r="8.8" fill="#fff" stroke="#111" strokeWidth="2" />
            <path d="M6 10.5h9M10.5 6v9" stroke="#1616ee" strokeWidth="3.2" />
            <path d="M17 17l9 10" stroke="#000" strokeWidth="3.4" strokeLinecap="round" />
          </svg>
        </BarIcon>
      </BottomBar>
    </Content>

    <WatermarkTitle>Activer Windows</WatermarkTitle>
    <WatermarkText>Accédez aux paramètres pour activer Windows.</WatermarkText>
  </Window>
)

export default App
